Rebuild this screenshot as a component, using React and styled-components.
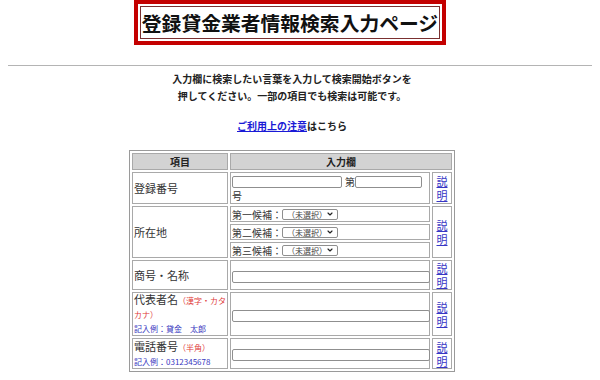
import React from 'react';
import styled, { createGlobalStyle } from 'styled-components';
import { ChevronDown } from 'lucide-react';

const Global = createGlobalStyle`
  body {
    margin: 0 8px;
    background: #fff;
    font-family: "Noto Sans CJK JP", "Noto Sans", sans-serif;
    color: #222;
  }
`;

const Page = styled.div`
  width: 568px;
`;

const TitleWrap = styled.div`
  display: flex;
  justify-content: center;
  padding-right: 4px;
`;

const TitleBox = styled.div`
  border: 4px solid #c40000;
  padding: 2px;
  background: #fff;
`;

const TitleInner = styled.h1`
  margin: 0;
  border: 1px solid #7a3030;
  padding: 0 1px;
  height: 31px;
  line-height: 31px;
  font-size: 19.8px;
  font-weight: 700;
  color: #111;
  white-space: nowrap;
`;

const Rule = styled.hr`
  margin: 20px 0 0;
  border: 0;
  border-top: 1px solid #b4b4b4;
  width: 584px;
`;

const Lead = styled.p`
  margin: 4px 0 0;
  text-align: center;
  font-size: 10px;
  font-weight: 700;
  line-height: 17px;
  color: #222;
`;

const NoteLine = styled.p`
  margin: 13px 0 0;
  text-align: center;
  font-size: 10px;
  font-weight: 700;
  line-height: 17px;
  color: #222;

  a {
    color: #1a1ad6;
    text-decoration: underline;
  }
`;

const Table = styled.table`
  margin: 16px auto 0;
  width: 326px;
  table-layout: fixed;
  border-collapse: separate;
  border-spacing: 2px;
  border: 1px solid #9a9a9a;
  background: #fff;
`;

const Th = styled.th`
  height: 15px;
  padding: 0;
  background: #d3d3d3;
  border: 1px solid #a9a9a9;
  font-size: 10px;
  font-weight: 700;
  color: #222;
  line-height: 14px;
`;

const Row = styled.tr`
  height: ${(p) => p.$h}px;
`;

const Td = styled.td`
  padding: 0 1px;
  border: 1px solid #a9a9a9;
  font-size: ${(p) => (p.$small ? 10 : 11)}px;
  line-height: ${(p) => (p.$tight ? 13 : 14)}px;
  color: #333;
  vertical-align: middle;
  text-align: ${(p) => (p.$center ? 'center' : 'left')};
  word-break: break-all;
`;

const Hint = styled.span`
  color: #e03a3a;
  font-size: 8px;
`;

const Example = styled.span`
  color: #3838c0;
  font-size: 8px;
`;

const HelpLink = styled.a`
  color: #3636c4;
  text-decoration: underline;
  font-size: 11px;
  line-height: 14px;
  display: block;
  width: 11px;
  margin: 0 auto;
`;

const TextInput = styled.input`
  box-sizing: border-box;
  width: ${(p) => p.$w}px;
  height: 12px;
  margin: 0;
  padding: 0;
  border: 1px solid #8f8f8f;
  border-radius: 2px;
  background: #fff;
  vertical-align: middle;
`;

const Dai = styled.span`
  display: inline-block;
  margin: 0 0 0 3px;
  font-size: 10px;
  vertical-align: middle;
`;

const Choice = styled.div`
  font-size: 10px;
  line-height: 13px;
  display: flex;
  align-items: center;
  white-space: nowrap;
`;

const SelectWrap = styled.span`
  position: relative;
  display: inline-flex;
  align-items: center;

  svg {
    position: absolute;
    right: 4px;
    pointer-events: none;
    color: #222;
  }
`;

const Select = styled.select`
  appearance: none;
  box-sizing: border-box;
  width: 56px;
  height: 11px;
  margin: 0;
  padding: 0 0 0 4px;
  border: 1px solid #8f8f8f;
  border-radius: 2px;
  background: #fff;
  font-family: inherit;
  font-size: 8px;
  line-height: 9px;
  color: #444;
`;

const Help = () => <HelpLink href="#">説明</HelpLink>;

const Pref = ({ label }) => (
  <Choice>
    {label}
    <SelectWrap>
      <Select defaultValue="">
        <option value="">（未選択）</option>
      </Select>
      <ChevronDown size={8} strokeWidth={3.5} />
    </SelectWrap>
  </Choice>
);

export default function App() {
  return (
    <>
      <Global />
      <Page>
        <TitleWrap>
          <TitleBox>
            <TitleInner>登録貸金業者情報検索入力ページ</TitleInner>
          </TitleBox>
        </TitleWrap>
        <Rule />
        <Lead>
          入力欄に検索したい言葉を入力して検索開始ボタンを
          <br />
          押してください。一部の項目でも検索は可能です。
        </Lead>
        <NoteLine>
          <a href="#">ご利用上の注意</a>はこちら
        </NoteLine>
        <Table>
          <colgroup>
            <col style={{ width: 96 }} />
            <col style={{ width: 200 }} />
            <col style={{ width: 20 }} />
          </colgroup>
          <thead>
            <tr>
              <Th>項目</Th>
              <Th colSpan={2}>入力欄</Th>
            </tr>
          </thead>
          <tbody>
            <Row $h={32}>
              <Td>登録番号</Td>
              <Td $small>
                <TextInput $w={110} />
                <Dai>第</Dai>
                <TextInput $w={67} />
                <br />
                号
              </Td>
              <Td $center>
                <Help />
              </Td>
            </Row>
            <Row $h={16}>
              <Td rowSpan={3}>所在地</Td>
              <Td>
                <Pref label="第一候補：" />
              </Td>
              <Td rowSpan={3} $center>
                <Help />
              </Td>
            </Row>
            <Row $h={16}>
              <Td>
                <Pref label="第二候補：" />
              </Td>
            </Row>
            <Row $h={16}>
              <Td>
                <Pref label="第三候補：" />
              </Td>
            </Row>
            <Row $h={30}>
              <Td>商号・名称</Td>
              <Td>
                <TextInput $w={198} />
              </Td>
              <Td $center>
                <Help />
              </Td>
            </Row>
            <Row $h={40}>
              <Td $tight>
                代表者名<Hint>（漢字・カタ</Hint>
                <br />
                <Hint>カナ）</Hint>
                <br />
                <Example>記入例：貸金　太郎</Example>
              </Td>
              <Td>
                <TextInput $w={198} />
              </Td>
              <Td $center>
                <Help />
              </Td>
            </Row>
            <Row $h={31}>
              <Td $tight>
                電話番号<Hint>（半角）</Hint>
                <br />
                <Example>記入例：0312345678</Example>
              </Td>
              <Td>
                <TextInput $w={198} />
              </Td>
              <Td $center>
                <Help />
              </Td>
            </Row>
          </tbody>
        </Table>
      </Page>
    </>
  );
}
